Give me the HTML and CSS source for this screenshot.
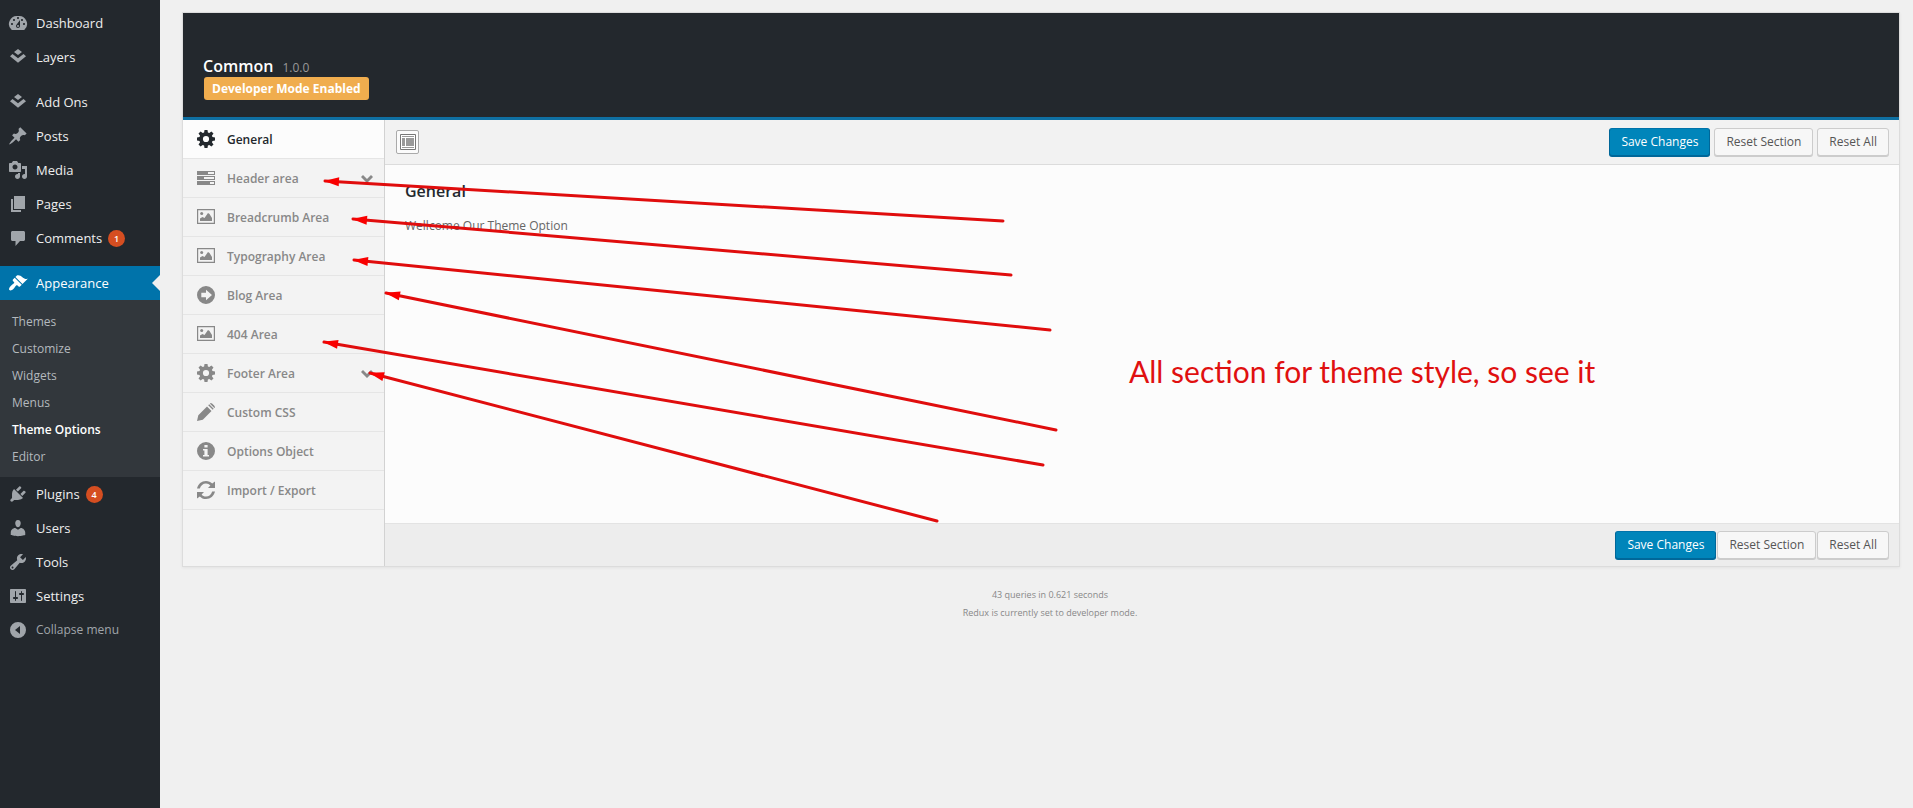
FILE: index.html
```html
<!DOCTYPE html>
<html lang="en">
<head>
<meta charset="utf-8">
<title>Theme Options</title>
<link rel="stylesheet" href="styles.css">
</head>
<body>
<svg class="defs" aria-hidden="true">
  <symbol id="dashboard" viewBox="0 0 20 20"><path fill-rule="evenodd" d="M3.76 17h12.48A7.998 7.998 0 0 0 10 3a7.998 7.998 0 0 0-6.24 14zM10 4c.55 0 1 .45 1 1s-.45 1-1 1-1-.45-1-1 .45-1 1-1zM6 6c.55 0 1 .45 1 1s-.45 1-1 1-1-.45-1-1 .45-1 1-1zm8 0c.55 0 1 .45 1 1s-.45 1-1 1-1-.45-1-1 .45-1 1-1zm-5.37 5.55L12 7v6c0 1.1-.9 2-2 2s-2-.9-2-2c0-.57.24-1.08.63-1.45zM4 10c.55 0 1 .45 1 1s-.45 1-1 1-1-.45-1-1 .45-1 1-1zm12 0c.55 0 1 .45 1 1s-.45 1-1 1-1-.45-1-1 .45-1 1-1z"/><circle cx="10" cy="13" r="1"/></symbol>
  <symbol id="layers" viewBox="0 0 20 20"><path d="M10 2l4 3-4 3-4-3zM4.500 7L10 11.200 15.500 7 18 9.200 10 15.800 2 9.200z"/></symbol>
  <symbol id="pin" viewBox="0 0 20 20"><path d="M10.440 3.020l1.820-1.820 6.360 6.350-1.830 1.820c-1.050-.68-2.480-.57-3.410.36l-.75.75c-.92.93-1.040 2.350-.35 3.410l-1.830 1.820-2.410-2.410-2.800 2.790c-.42.42-3.380 2.710-3.800 2.290s1.860-3.390 2.280-3.810l2.790-2.790L4.100 9.360l1.830-1.820c1.050.69 2.480.57 3.400-.36l.75-.75c.93-.92 1.050-2.350.36-3.410z"/></symbol>
  <symbol id="media" viewBox="0 0 20 20"><path d="M13 11V4c0-.55-.45-1-1-1h-1.670L9 1H5L3.670 3H2c-.55 0-1 .45-1 1v7c0 .55.45 1 1 1h10c.55 0 1-.45 1-1zM7 4.500c1.380 0 2.500 1.120 2.500 2.500S8.380 9.500 7 9.500 4.500 8.380 4.500 7 5.620 4.500 7 4.500zM14 6h5v10.500c0 1.380-1.120 2.500-2.500 2.500S14 17.880 14 16.500s1.120-2.500 2.500-2.500c.17 0 .34.02.5.05V9h-3V6zm-4 8.050V13h2v3.500c0 1.380-1.120 2.500-2.500 2.500S7 17.880 7 16.500 8.120 14 9.500 14c.17 0 .34.02.5.05z"/></symbol>
  <symbol id="page" viewBox="0 0 20 20"><path d="M6 15V2h11v13H6zm-1 1h8v2H3V5h2v11z"/></symbol>
  <symbol id="comment" viewBox="0 0 20 20"><path d="M4.500 3h11c.8 0 1.500.7 1.500 1.500v7c0 .8-.7 1.500-1.500 1.500H12l-4.500 5v-5h-3C3.700 13 3 12.300 3 11.500v-7C3 3.700 3.700 3 4.500 3z"/></symbol>
  <symbol id="brush" viewBox="0 0 20 20"><path d="M14.480 11.060L7.410 3.990l1.500-1.500c.5-.56 2.300-.47 3.510.32 1.210.8 1.430 1.280 2.910 2.100 1.180.64 2.450 1.260 4.450.85zm-.71.71L6.700 4.700 4.930 6.470c-.39.39-.39 1.020 0 1.410l1.060 1.060c.39.39.39 1.030 0 1.420-.6.6-1.430 1.110-2.210 1.690-.35.26-.7.53-1.010.84C1.430 14.230.4 16.080 1.400 17.070c.99 1 2.840-.03 4.180-1.360.31-.31.58-.66.85-1.020.57-.78 1.080-1.610 1.690-2.210.39-.39 1.020-.39 1.410 0l1.060 1.060c.39.39 1.020.39 1.410 0z"/></symbol>
  <symbol id="plug" viewBox="0 0 20 20"><path d="M13.110 4.360L9.870 7.600 8 5.730l3.240-3.240c.35-.34 1.050-.2 1.560.32.52.51.66 1.210.31 1.550zm-8 1.770l.91-1.120 9.010 9.010-1.190.84c-.71.71-2.630 1.160-3.820 1.160H6.140L4.900 17.260c-.59.59-1.540.59-2.120 0-.59-.58-.59-1.530 0-2.120l1.240-1.240v-3.880c0-1.130.4-3.190 1.090-3.890zm7.260 3.970l3.240-3.240c.34-.35 1.040-.21 1.550.31.52.51.66 1.210.31 1.550l-3.240 3.250z"/></symbol>
  <symbol id="user" viewBox="0 0 20 20"><path d="M10 9.250c-2.270 0-2.730-3.440-2.730-3.440C7 4.020 7.820 2 9.970 2c2.160 0 2.980 2.020 2.710 3.810 0 0-.41 3.440-2.680 3.440zm0 2.570L12.720 10c2.390 0 4.520 2.330 4.520 4.530v2.490s-3.650 1.130-7.240 1.130c-3.650 0-7.240-1.130-7.240-1.130v-2.490c0-2.250 1.940-4.480 4.470-4.480z"/></symbol>
  <symbol id="wrench" viewBox="0 0 20 20"><path d="M16.680 9.770c-1.340 1.340-3.300 1.670-4.950.99l-5.410 6.520c-.99.99-2.590.99-3.580 0s-.99-2.590 0-3.570l6.520-5.420c-.68-1.650-.35-3.610.99-4.950 1.280-1.280 3.120-1.620 4.720-1.060l-2.890 2.890 2.820 2.820 2.860-2.870c.53 1.580.18 3.390-1.080 4.650zM3.810 16.210c.4.39 1.040.39 1.430 0 .4-.4.4-1.040 0-1.430-.39-.4-1.030-.4-1.430 0-.39.39-.39 1.030 0 1.430z"/></symbol>
  <symbol id="sliders" viewBox="0 0 20 20"><path fill-rule="evenodd" d="M18 16V4c0-.55-.45-1-1-1H3c-.55 0-1 .45-1 1v12c0 .55.45 1 1 1h14c.55 0 1-.45 1-1zM8 11h1c.55 0 1 .45 1 1s-.45 1-1 1H8v1.500c0 .28-.22.5-.5.5s-.5-.22-.5-.5V13H6c-.55 0-1-.45-1-1s.45-1 1-1h1V5.500c0-.28.22-.5.5-.5s.5.22.5.5V11zm5-2h-1c-.55 0-1-.45-1-1s.45-1 1-1h1V5.500c0-.28.22-.5.5-.5s.5.22.5.5V7h1c.55 0 1 .45 1 1s-.45 1-1 1h-1v5.500c0 .28-.22.5-.5.5s-.5-.22-.5-.5V9z"/></symbol>
  <symbol id="collapse" viewBox="0 0 20 20"><path fill-rule="evenodd" d="M10 2a8 8 0 1 1 0 16 8 8 0 0 1 0-16zM12 6l-5 4 5 4z"/></symbol>
  <symbol id="cog" viewBox="0 0 18 18"><path fill-rule="evenodd" d="M7.500 0h3l.4 2.500 1.400.6 2.100-1.600 2.100 2.100-1.600 2.100.6 1.400 2.500.4v3l-2.500.4-.6 1.400 1.600 2.100-2.100 2.100-2.100-1.600-1.400.6-.4 2.500h-3l-.4-2.500-1.400-.6-2.100 1.600-2.100-2.100 1.600-2.100-.6-1.400L0 10.500v-3l2.500-.4.6-1.400-1.600-2.100 2.100-2.100 2.100 1.600 1.400-.6zM9 5.900a3.100 3.100 0 1 0 0 6.200 3.100 3.100 0 0 0 0-6.200z"/></symbol>
  <symbol id="tasks" viewBox="0 0 18 18"><path fill-rule="evenodd" d="M0 2h18v4H0zM11 3v2h6V3zM0 7h18v4H0zM7 8v2h10V8zM0 12h18v4H0zM13 13v2h4v-2z"/></symbol>
  <symbol id="picture" viewBox="0 0 18 18"><path fill-rule="evenodd" d="M0 1h18v15H0zM1.200 2.200v12.600h15.600V2.200z"/><circle cx="4.700" cy="5.500" r="1.500"/><path d="M3 13v-2.500L5.500 9l2 1L11 5l1.500 1 2.500 4v3z"/></symbol>
  <symbol id="arrow" viewBox="0 0 18 18"><path fill-rule="evenodd" d="M9 0a9 9 0 1 1 0 18A9 9 0 0 1 9 0zM9 3.800v3H4.300v4.400H9v3L15 9z"/></symbol>
  <symbol id="pencil" viewBox="0 0 18 18"><path d="M10 3.500L14.500 8l-8.700 8.700L0 18l1.300-5.800zM11.200 2.300l1-1 4.500 4.500-1 1zM13 .7l.6-.6c.8-.8 5.100 3.500 4.300 4.300l-.6.6z"/></symbol>
  <symbol id="info" viewBox="0 0 18 18"><path fill-rule="evenodd" d="M9 0a9 9 0 1 1 0 18A9 9 0 0 1 9 0zM7.400 3v2.600h3.200V3zM6 7v1.400h1.400v4.700H6v1.400h6v-1.400h-1.400V7z"/></symbol>
  <symbol id="refresh" viewBox="0 0 18 18"><path d="M0 7.500C1 3 4.500 0 9 0c2.600 0 4.700 1 6.200 2.600L18 .5V7h-7l2.400-2.400C12.300 3.200 10.800 2.400 9 2.400c-3 0-5.300 2-6.200 5.100zM18 10.500c-1 4.500-4.500 7.500-9 7.500-2.600 0-4.700-1-6.200-2.600L0 17.500V11h7l-2.400 2.400c1.100 1.400 2.600 2.200 4.400 2.200 3 0 5.300-2 6.200-5.100z"/></symbol>
  <symbol id="chevron" viewBox="0 0 12 8"><path d="M0 2l2-2 4 4 4-4 2 2-6 6z"/></symbol>
</svg>

<div class="layout">
  <nav class="menu" aria-label="Main menu">
    <a class="menu-item" href="#"><svg><use href="#dashboard"/></svg>Dashboard</a>
    <a class="menu-item" href="#"><svg><use href="#layers"/></svg>Layers</a>
    <div class="menu-gap"></div>
    <a class="menu-item" href="#"><svg><use href="#layers"/></svg>Add Ons</a>
    <a class="menu-item" href="#"><svg><use href="#pin"/></svg>Posts</a>
    <a class="menu-item" href="#"><svg><use href="#media"/></svg>Media</a>
    <a class="menu-item" href="#"><svg><use href="#page"/></svg>Pages</a>
    <a class="menu-item" href="#"><svg><use href="#comment"/></svg>Comments <span class="count">1</span></a>
    <div class="menu-gap"></div>
    <a class="menu-item current" href="#"><svg><use href="#brush"/></svg>Appearance</a>
    <div class="submenu">
      <a href="#">Themes</a>
      <a href="#">Customize</a>
      <a href="#">Widgets</a>
      <a href="#">Menus</a>
      <a class="selected" href="#">Theme Options</a>
      <a href="#">Editor</a>
    </div>
    <a class="menu-item" href="#"><svg><use href="#plug"/></svg>Plugins <span class="count">4</span></a>
    <a class="menu-item" href="#"><svg><use href="#user"/></svg>Users</a>
    <a class="menu-item" href="#"><svg><use href="#wrench"/></svg>Tools</a>
    <a class="menu-item" href="#"><svg><use href="#sliders"/></svg>Settings</a>
    <button class="menu-item collapse" type="button"><svg><use href="#collapse"/></svg>Collapse menu</button>
  </nav>

  <main class="page">
    <div class="panel">
      <header class="panel-header">
        <div class="title"><h1>Common</h1><span>1.0.0</span></div>
        <span class="dev-mode">Developer Mode Enabled</span>
      </header>
      <div class="panel-body">
        <nav class="sections" aria-label="Sections">
          <a class="active" href="#"><svg><use href="#cog"/></svg>General</a>
          <a href="#"><svg><use href="#tasks"/></svg>Header area<svg class="chevron"><use href="#chevron"/></svg></a>
          <a href="#"><svg><use href="#picture"/></svg>Breadcrumb Area</a>
          <a href="#"><svg><use href="#picture"/></svg>Typography Area</a>
          <a href="#"><svg><use href="#arrow"/></svg>Blog Area</a>
          <a href="#"><svg><use href="#picture"/></svg>404 Area</a>
          <a href="#"><svg><use href="#cog"/></svg>Footer Area<svg class="chevron"><use href="#chevron"/></svg></a>
          <a href="#"><svg><use href="#pencil"/></svg>Custom CSS</a>
          <a href="#"><svg><use href="#info"/></svg>Options Object</a>
          <a href="#"><svg><use href="#refresh"/></svg>Import / Export</a>
        </nav>
        <div class="content">
          <div class="toolbar">
            <button class="expand" type="button" aria-label="Expand options">
              <svg viewBox="0 0 16 16"><path fill="#fff" stroke="#777" d="M.5.5h15v15H.5z"/><path fill="#999" d="M2 2h12v1H2zM2 4h3v8H2zM6 4h8v8H6zM2 13h12v1H2z"/></svg>
            </button>
            <div class="actions">
              <button class="button primary" type="button">Save Changes</button>
              <button class="button" type="button">Reset Section</button>
              <button class="button" type="button">Reset All</button>
            </div>
          </div>
          <section class="section-body">
            <h2>General</h2>
            <p>Wellcome Our Theme Option</p>
          </section>
          <div class="toolbar bottom">
            <div class="actions tight">
              <button class="button primary" type="button">Save Changes</button>
              <button class="button" type="button">Reset Section</button>
              <button class="button" type="button">Reset All</button>
            </div>
          </div>
        </div>
      </div>
    </div>
    <footer class="stats">
      <p>43 queries in 0.621 seconds</p>
      <p>Redux is currently set to developer mode.</p>
    </footer>
  </main>
</div>

<svg class="arrows" width="1100" height="560" aria-hidden="true">
  <defs><marker id="head" markerUnits="userSpaceOnUse" markerWidth="16" markerHeight="10" refX="1" refY="5" orient="auto"><path fill="#f90000" d="M0 5L15 .5v9z"/></marker></defs>
  <g stroke="#e00d0d" stroke-width="3" stroke-linecap="round">
    <path marker-start="url(#head)" d="M325 181L1003 221"/>
    <path marker-start="url(#head)" d="M353 219L1011 275"/>
    <path marker-start="url(#head)" d="M354 260L1050 330"/>
    <path marker-start="url(#head)" d="M386 293L1056 430"/>
    <path marker-start="url(#head)" d="M324 342L1043 465"/>
    <path marker-start="url(#head)" d="M370 373L937 521"/>
  </g>
</svg>
<p class="note">All section for theme style, so see it</p>
</body>
</html>
```

FILE: styles.css
```css
* { box-sizing: border-box; }
body {
  margin: 0;
  background: #f0f0f0;
  color: #555;
  font: 13px/20px "Open Sans", "Noto Sans", sans-serif;
}
h1, h2, p { margin: 0; }
a { color: inherit; text-decoration: none; }
svg { fill: currentColor; }
.defs { display: none; }
.layout { display: flex; min-height: 100vh; }

.menu {
  display: flex;
  flex: 0 0 160px;
  flex-direction: column;
  padding-top: 6px;
  background: #23282d;
  color: #eee;
}
.menu-item {
  position: relative;
  display: flex;
  align-items: center;
  height: 34px;
  padding-left: 8px;
}
.menu-item svg { width: 20px; height: 20px; margin-right: 8px; color: #a0a5aa; }
.menu-gap { height: 11px; }
.count {
  min-width: 17px;
  height: 17px;
  margin-left: 6px;
  border-radius: 10px;
  background: #d54e21;
  color: #fff;
  font-size: 9px;
  font-weight: 600;
  line-height: 17px;
  text-align: center;
}
.current { background: #0073aa; color: #fff; }
.current svg { color: #fff; }
.current::after {
  position: absolute;
  top: 9px;
  right: 0;
  border: 8px solid transparent;
  border-left-width: 0;
  border-right-color: #f0f0f0;
  content: "";
}
.submenu {
  display: flex;
  flex-direction: column;
  padding: 8px 0 7px 12px;
  background: #32373c;
  color: #b4b9be;
  font-size: 12px;
  line-height: 27px;
}
.selected { color: #fff; font-weight: 600; }
.collapse { border: 0; background: none; color: #a0a5aa; font: inherit; font-size: 12px; }

.page { flex: 1; min-width: 0; padding: 12px 13px 0 22px; }
.panel { border: 1px solid #dcdcdc; box-shadow: 0 1px 3px rgba(0, 0, 0, .06); }
.panel-header {
  padding: 42px 20px 17px;
  border-bottom: 3px solid #0f70a2;
  background: #23282d;
  color: #fff;
}
.title { display: flex; align-items: baseline; gap: 9px; height: 22px; line-height: 22px; }
.title h1 { font-size: 16px; font-weight: 600; }
.title span { color: #999; font-size: 12px; }
.dev-mode {
  display: inline-block;
  margin-left: 1px;
  padding: 0 8px;
  border-radius: 3px;
  background: #f0ad4e;
  font-size: 12px;
  font-weight: 700;
  line-height: 23px;
  vertical-align: top;
}
.panel-body { display: flex; }
.sections {
  flex: 0 0 202px;
  border-right: 1px solid #d2d2d2;
  background: #f3f3f3;
  color: #888;
  font-size: 12px;
  font-weight: 600;
}
.sections a {
  display: flex;
  align-items: center;
  height: 39px;
  padding: 1px 11px 0 14px;
  border-bottom: 1px solid #e5e5e5;
}
.sections svg { width: 18px; height: 18px; margin: 0 12px 2px 0; }
.sections .chevron { width: 12px; height: 8px; margin: 0 0 0 auto; }
.sections .active { background: #fcfcfc; color: #23282d; }

.content { display: flex; flex: 1; flex-direction: column; min-width: 0; background: #fcfcfc; }
.toolbar {
  display: flex;
  align-items: center;
  justify-content: space-between;
  height: 45px;
  padding: 0 10px 0 11px;
  border-bottom: 1px solid #dcdcdc;
  background: #f2f2f2;
}
.expand {
  display: flex;
  align-items: center;
  justify-content: center;
  width: 23px;
  height: 24px;
  padding: 0;
  border: 1px solid #aaa;
  border-radius: 2px;
  background: #fbfbfb;
}
.expand svg { width: 16px; height: 16px; }
.actions { display: flex; gap: 4px; margin-left: auto; }
.tight { gap: 1px; }
.button {
  height: 28px;
  padding: 0 11px;
  border: 1px solid #ccc;
  border-radius: 3px;
  background: #f7f7f7;
  box-shadow: 0 1px 0 #ccc;
  color: #555;
  font: inherit;
  font-size: 12px;
}
.primary { border-color: #0073aa #006799 #006799; background: #0085ba; box-shadow: 0 1px 0 #006799; color: #fff; }
.section-body { padding: 15px 20px 0; min-height: 358px; }
.section-body h2 { color: #23282d; font-size: 16px; font-weight: 600; line-height: 22px; }
.section-body p { margin-top: 14px; color: #666; font-size: 12px; }
.bottom { height: 43px; border-top: 1px solid #e3e3e3; border-bottom: 0; background: #ededed; }
.stats { padding: 19px 0 0 18px; color: #888; font-size: 9px; line-height: 18px; text-align: center; }

.arrows { position: absolute; top: 0; left: 0; pointer-events: none; }
.note {
  position: absolute;
  top: 351px;
  left: 1129px;
  color: #e01010;
  font: 30px/40px Lato, sans-serif;
  white-space: nowrap;
}
```
